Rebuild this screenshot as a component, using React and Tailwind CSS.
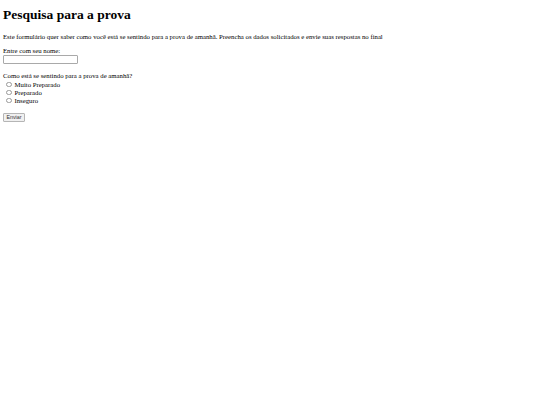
import React from 'react';

const opcoes = ['Muito Preparado', 'Preparado', 'Inseguro'];

export default function App() {
  return (
    <div className="min-h-screen bg-white text-black font-['Liberation_Serif','Times_New_Roman',serif] px-[3px] pt-[7px]">
      <h1 className="text-[13.5px] leading-[16px] font-bold">Pesquisa para a prova</h1>
      <p className="mt-[10px] text-[6.75px] leading-[8px]">
        Este formulário quer saber como você está se sentindo para a prova de amanhã. Preencha os dados solicitados e envie suas respostas no final
      </p>
      <form className="flex flex-col items-start text-[6.75px] leading-[8px]" onSubmit={(e) => e.preventDefault()}>
        <label htmlFor="nome" className="mt-[6px]">Entre com seu nome:</label>
        <input
          id="nome"
          type="text"
          className="mt-0 w-[75px] h-[9px] border border-[#a9a9a9] rounded-[1px] bg-white px-[1px] font-['Liberation_Sans',Arial,sans-serif] text-[5.5px] leading-[7px]"
        />
        <div className="mt-[8px]">Como está se sentindo para a prova de amanhã?</div>
        <div className="mt-[0.5px] flex flex-col">
          {opcoes.map((o) => (
            <label key={o} className="h-[8px] flex items-center">
              <input
                type="radio"
                name="estado"
                className="appearance-none ml-[3px] mr-[3px] w-[5.5px] h-[5.5px] rounded-full border border-[#9a9a9a] bg-white"
              />
              <span>{o}</span>
            </label>
          ))}
        </div>
        <button
          type="submit"
          className="mt-[8.5px] w-[22px] h-[9px] flex items-center justify-center border border-[#b5b5b5] rounded-[1px] bg-[#f0f0f0] text-[#333] font-['Liberation_Sans',Arial,sans-serif] text-[5.3px] leading-[7px]"
        >
          Enviar
        </button>
      </form>
    </div>
  );
}
